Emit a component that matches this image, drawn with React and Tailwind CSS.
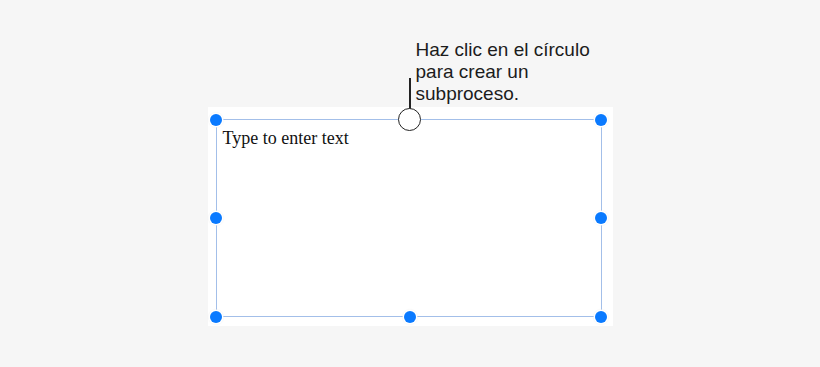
import React from "react";

const handleBase =
  "absolute w-[12px] h-[12px] rounded-full bg-[#0a7aff] shadow-[0_0_0_1.5px_#ffffff,0_0_2px_1px_rgba(0,0,0,0.12)]";

export default function App() {
  return (
    <div className="w-full h-[367px] bg-[#f6f6f6] flex justify-center overflow-hidden">
      <div className="w-[405px] flex flex-col pt-[39px]">
        {/* callout */}
        <div
          className="pl-[208px] text-[19px] leading-[22px] text-[#1c1c1c]"
          style={{ fontFamily: '"Liberation Sans", Arial, sans-serif' }}
        >
          <div>Haz clic en el círculo</div>
          <div>para crear un</div>
          <div>subproceso.</div>
        </div>

        {/* text box */}
        <div className="mt-[2px] h-[219px] bg-white flex pl-[8px] pt-[12px] pr-[11px] pb-[9px]">
          <div className="relative flex-1 border border-[#a3bfe9]">
            <div
              className="pl-[6px] pt-[8px] text-[18px] leading-[20px] text-[#111]"
              style={{ fontFamily: '"Liberation Serif", "DejaVu Serif", serif' }}
            >
              Type to enter text
            </div>

            {/* handles */}
            <div className={handleBase + " -left-[6.5px] -top-[6.5px]"} />
            <div className={handleBase + " -right-[6.5px] -top-[6.5px]"} />
            <div className={handleBase + " -left-[6.5px] top-[91.5px]"} />
            <div className={handleBase + " -right-[6.5px] top-[91.5px]"} />
            <div className={handleBase + " -left-[6.5px] -bottom-[6.5px]"} />
            <div className={handleBase + " left-[187.5px] -bottom-[6.5px]"} />
            <div className={handleBase + " -right-[6.5px] -bottom-[6.5px]"} />

            {/* subprocess connector */}
            <div className="absolute left-[192px] top-[-42px] w-[2px] h-[32px] bg-[#222]" />
            <div className="absolute left-[181.5px] top-[-12px] w-[23px] h-[23px] rounded-full bg-white border-[1.5px] border-[#222]" />
          </div>
        </div>
      </div>
    </div>
  );
}
